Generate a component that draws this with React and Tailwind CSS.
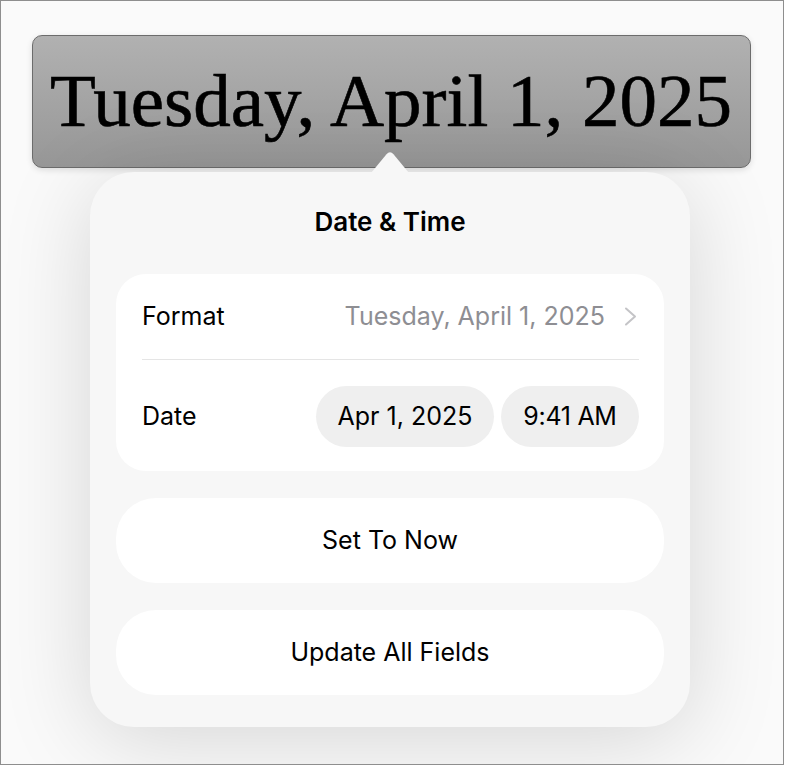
import React from "react";

function Chevron() {
  return (
    <svg width="14" height="19" viewBox="0 0 14 19" fill="none">
      <path d="M2 1.5 L11 9.5 L2 17.5" stroke="#c4c4c7" strokeWidth="2" strokeLinecap="round" strokeLinejoin="round" />
    </svg>
  );
}

export default function App() {
  const sans = { fontFamily: "Inter, 'Noto Sans', sans-serif" };
  return (
    <div className="w-[785px] h-[766px] bg-white">
      <div
        className="w-[784px] h-[765px] border border-[#8e8e8e] bg-[#fafafa] flex flex-col items-start overflow-hidden"
        style={sans}
      >
        <div className="mt-[34px] ml-[31px] w-[719px] h-[133px] rounded-[10px] border border-[#6c6c6c] bg-gradient-to-b from-[#b1b1b1] to-[#979797] flex items-center pl-[17px] shadow-[0_2px_6px_rgba(0,0,0,0.12)]">
          <span
            className="text-[75px] leading-none text-black whitespace-nowrap pb-[2px] [-webkit-text-stroke:0.6px_black]"
            style={{ fontFamily: "'Liberation Serif', 'Times New Roman', serif" }}
          >
            Tuesday, April 1, 2025
          </span>
        </div>

        <div className="relative mt-[4px] ml-[89px] w-[600px] h-[555px] rounded-[44px] bg-[#f7f7f7] shadow-[0_12px_90px_rgba(0,0,0,0.15)] flex flex-col">
          <svg
            className="absolute left-[281px] top-[-21px]"
            width="38"
            height="22"
            viewBox="0 0 38 22"
          >
            <path d="M0 22 L15.5 3.2 Q19 -0.8 22.5 3.2 L38 22 Z" fill="#f7f7f7" />
          </svg>

          <div className="pt-[35px] h-[65px] flex justify-center">
            <span className="text-[26px] leading-[30px] font-semibold text-black">Date &amp; Time</span>
          </div>

          <div className="mt-[37px] mx-[26px] rounded-[30px] bg-white pl-[26px] pr-[25px] flex flex-col">
            <div className="h-[85px] flex items-center justify-between">
              <span className="text-[25px] text-black">Format</span>
              <div className="flex items-center gap-[19px] pr-[1px]">
                <span className="text-[25px] text-[#8e8e93]">Tuesday, April 1, 2025</span>
                <Chevron />
              </div>
            </div>
            <div className="h-px bg-[#e5e5e5]" />
            <div className="h-[111px] flex items-center justify-between pt-[2px]">
              <span className="text-[25px] text-black">Date</span>
              <div className="flex items-center gap-[7px]">
                <div className="w-[178px] h-[61px] rounded-full bg-[#efefef] flex items-center justify-center text-[25px] text-black">
                  Apr 1, 2025
                </div>
                <div className="w-[138px] h-[61px] rounded-full bg-[#efefef] flex items-center justify-center text-[25px] text-black tracking-[-0.3px]">
                  9:41 AM
                </div>
              </div>
            </div>
          </div>

          <div className="mt-[27px] mx-[26px] h-[85px] rounded-[40px] bg-white flex items-center justify-center text-[25px] text-black">
            Set To Now
          </div>
          <div className="mt-[27px] mx-[26px] h-[85px] rounded-[40px] bg-white flex items-center justify-center text-[25px] text-black">
            Update All Fields
          </div>
        </div>
      </div>
    </div>
  );
}
